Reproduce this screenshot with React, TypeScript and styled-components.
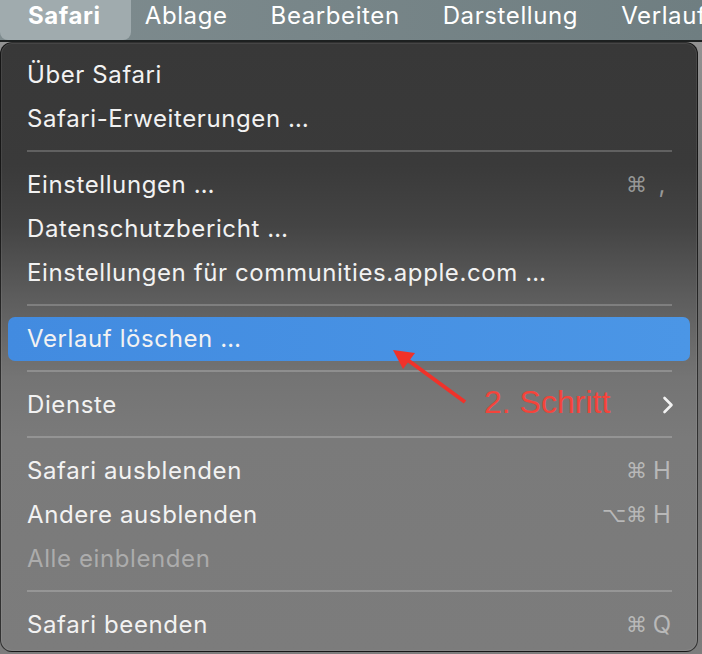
import React from 'react';
import styled, { createGlobalStyle, css } from 'styled-components';

const GlobalStyle = createGlobalStyle`
  html, body { margin: 0; padding: 0; }
  body {
    background: #8a8a8a;
    font-family: Inter, "Noto Sans", "Liberation Sans", sans-serif;
    -webkit-font-smoothing: antialiased;
  }
`;

const Screen = styled.div`
  position: relative;
  width: 702px;
  height: 654px;
  overflow: hidden;
  background: linear-gradient(180deg, #9a9a9a 0%, #6a6a6a 40%, #7d7d7d 100%);
`;

const MenuBar = styled.div`
  display: flex;
  align-items: flex-start;
  gap: 43px;
  height: 40px;
  background: linear-gradient(90deg, #7f8c8f 0%, #778588 50%, #6f7e81 100%);
  border-bottom: 2px solid #1d2020;
`;

const BarItem = styled.div<{ $active?: boolean }>`
  height: 40px;
  box-sizing: border-box;
  line-height: 31px;
  font-size: 24px;
  letter-spacing: 0.6px;
  color: #ffffff;
  font-weight: 400;
  white-space: nowrap;
  ${p =>
    p.$active &&
    css`
      font-weight: 700;
      padding: 0 30px 0 28px;
      margin-right: -29px;
      background: #a0abae;
      border-radius: 0 0 8px 8px;
    `}
`;

const Menu = styled.div`
  width: 698px;
  height: 610px;
  box-sizing: border-box;
  padding: 10px 0 4px;
  border: 1px solid rgba(0, 0, 0, 0.6);
  border-radius: 12px;
  background: linear-gradient(
    180deg,
    #383838 0%,
    #3a3a3a 20%,
    #444444 30%,
    #5d5d5d 42%,
    #747474 55%,
    #7a7a7a 65%,
    #7c7c7c 100%
  );
  box-shadow: inset 0 0 0 1px rgba(255, 255, 255, 0.07);
`;

const Row = styled.div<{ $highlight?: boolean; $disabled?: boolean }>`
  display: flex;
  align-items: center;
  justify-content: space-between;
  height: 44px;
  margin: 0 7px;
  padding: 0 18px 0 19px;
  border-radius: 7px;
  font-size: 24px;
  letter-spacing: 0.6px;
  line-height: 44px;
  white-space: nowrap;
  color: ${p => (p.$disabled ? 'rgba(255,255,255,0.38)' : '#f2f2f2')};
  background: ${p =>
    p.$highlight ? 'linear-gradient(90deg, #428be0 0%, #4b96e6 100%)' : 'transparent'};
`;

const Label = styled.span`
  display: block;
`;

const Shortcut = styled.span`
  display: flex;
  align-items: center;
  gap: 5px;
  color: rgba(255, 255, 255, 0.47);
  letter-spacing: 0;
`;

const Modifiers = styled.span`
  font-family: "DejaVu Sans", sans-serif;
  font-size: 21px;
`;

const Key = styled.span`
  display: block;
  width: 20px;
  text-align: center;
  font-size: 24px;
`;

const Separator = styled.div`
  height: 22px;
  margin: 0 25px 0 26px;
  display: flex;
  flex-direction: column;
  &::after {
    content: '';
    display: block;
    margin-top: 9px;
    height: 2px;
    background: rgba(255, 255, 255, 0.2);
  }
`;

const Chevron = styled.svg`
  width: 12px;
  height: 18px;
  margin-right: -2px;
`;

const Arrow = styled.svg`
  position: absolute;
  left: 0;
  top: 0;
  width: 702px;
  height: 654px;
  pointer-events: none;
`;

const Note = styled.div`
  position: absolute;
  left: 484px;
  top: 386px;
  font-family: "Liberation Sans", Arial, sans-serif;
  font-size: 32px;
  line-height: 32px;
  color: #f4443b;
  white-space: nowrap;
`;

type Item =
  | { type: 'sep' }
  | {
      type: 'item';
      label: string;
      mods?: string;
      keyChar?: string;
      highlight?: boolean;
      disabled?: boolean;
      submenu?: boolean;
    };

const items: Item[] = [
  { type: 'item', label: 'Über Safari' },
  { type: 'item', label: 'Safari-Erweiterungen …' },
  { type: 'sep' },
  { type: 'item', label: 'Einstellungen …', mods: '⌘', keyChar: ',' },
  { type: 'item', label: 'Datenschutzbericht …' },
  { type: 'item', label: 'Einstellungen für communities.apple.com …' },
  { type: 'sep' },
  { type: 'item', label: 'Verlauf löschen …', highlight: true },
  { type: 'sep' },
  { type: 'item', label: 'Dienste', submenu: true },
  { type: 'sep' },
  { type: 'item', label: 'Safari ausblenden', mods: '⌘', keyChar: 'H' },
  { type: 'item', label: 'Andere ausblenden', mods: '⌥⌘', keyChar: 'H' },
  { type: 'item', label: 'Alle einblenden', disabled: true },
  { type: 'sep' },
  { type: 'item', label: 'Safari beenden', mods: '⌘', keyChar: 'Q' },
];

export default function App() {
  return (
    <>
      <GlobalStyle />
      <Screen>
        <MenuBar>
          <BarItem $active>Safari</BarItem>
          <BarItem>Ablage</BarItem>
          <BarItem>Bearbeiten</BarItem>
          <BarItem>Darstellung</BarItem>
          <BarItem>Verlauf</BarItem>
        </MenuBar>
        <Menu>
          {items.map((it, i) =>
            it.type === 'sep' ? (
              <Separator key={i} />
            ) : (
              <Row key={i} $highlight={it.highlight} $disabled={it.disabled}>
                <Label>{it.label}</Label>
                {it.keyChar && (
                  <Shortcut>
                    <Modifiers>{it.mods}</Modifiers>
                    <Key>{it.keyChar}</Key>
                  </Shortcut>
                )}
                {it.submenu && (
                  <Chevron viewBox="0 0 12 18">
                    <polyline
                      points="2.5,2 9.5,9 2.5,16"
                      fill="none"
                      stroke="#f2f2f2"
                      strokeWidth="2.6"
                      strokeLinecap="round"
                      strokeLinejoin="round"
                    />
                  </Chevron>
                )}
              </Row>
            )
          )}
        </Menu>
        <Arrow viewBox="0 0 702 654">
          <line x1="465" y1="402" x2="405" y2="358" stroke="#f0322a" strokeWidth="4" strokeLinecap="butt" />
          <polygon points="393,350 415,353 403,369" fill="#f0322a" />
        </Arrow>
        <Note>2. Schritt</Note>
      </Screen>
    </>
  );
}
